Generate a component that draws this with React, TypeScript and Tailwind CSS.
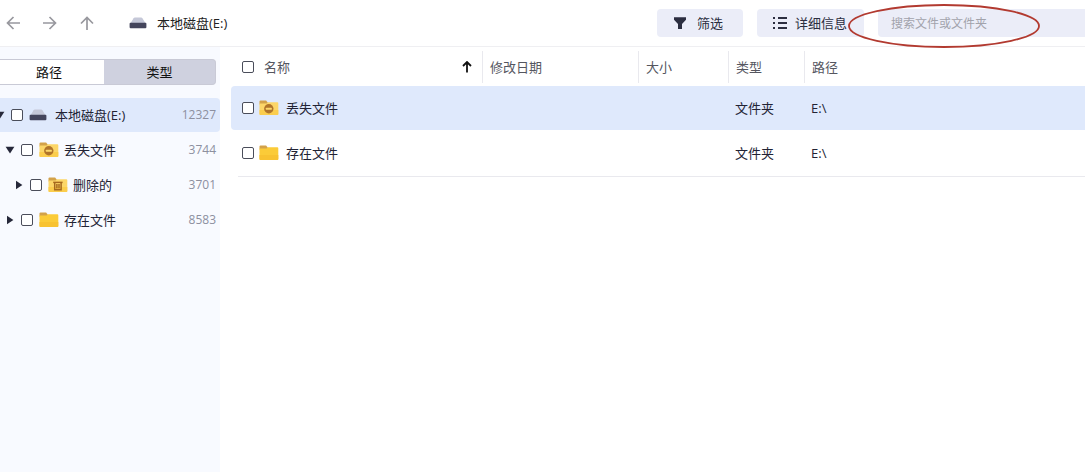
import type { ReactNode } from "react";

type IconKind = "disk" | "lost" | "deleted" | "folder";

function DiskIcon() {
  return (
    <svg width="18" height="16" viewBox="0 0 18 16" aria-hidden="true" className="shrink-0">
      <path d="M4.6 3.2Q5 2.6 5.8 2.6h6.4q.8 0 1.2.6L17 9H1z" fill="#c5c8d8" />
      <rect x=".6" y="7.8" width="16.8" height="5.4" rx="1" fill="#44455c" />
    </svg>
  );
}

function FolderIcon({ kind }: { kind: IconKind }) {
  const plain = kind === "folder";
  return (
    <svg width="20" height="16" viewBox="0 0 20 16" aria-hidden="true" className="shrink-0">
      <path d="M.5 1.4Q.5.4 1.5.4h5.6l1.6 2.2v2H.5z" fill="#d3a24a" />
      <path d="M.5 3.6h7L9 2.2h9.3q1 0 1 1v10.9q0 1-1 1H1.5q-1 0-1-1z" fill={plain ? "#fbcb38" : "#fcd668"} />
      <path d="M.5 10h18.8v4.1q0 1-1 1H1.5q-1 0-1-1z" fill={plain ? "#f8c231" : "#fbcd4d"} />
      {kind === "lost" && (
        <>
          <circle cx="9.8" cy="8.8" r="4.7" fill="#b0742a" />
          <rect x="6.8" y="7.8" width="6" height="2" rx=".5" fill="#fcd668" />
        </>
      )}
      {kind === "deleted" && (
        <g fill="none" stroke="#a5681f" strokeWidth="1.5">
          <path d="M5.2 5.4h9.4" />
          <path d="M6.7 5.5v7.3h6.4V5.5M8.9 7v4.4M11 7v4.4" />
        </g>
      )}
    </svg>
  );
}

function ItemIcon({ kind }: { kind: IconKind }) {
  return kind === "disk" ? <DiskIcon /> : <FolderIcon kind={kind} />;
}

function Check({ label }: { label: string }) {
  return (
    <input
      type="checkbox"
      aria-label={label}
      className="m-0 size-3 shrink-0 appearance-none rounded-xs border border-[#4a4d5a] bg-white checked:bg-[#3e4150]"
    />
  );
}

function NavButton({ label, children }: { label: string; children: ReactNode }) {
  return (
    <button type="button" aria-label={label} className="flex size-4 items-center justify-center text-[#98989e]">
      <svg width="16" height="16" viewBox="0 0 16 16" fill="none" stroke="currentColor" strokeWidth="1.7" aria-hidden="true">
        {children}
      </svg>
    </button>
  );
}

const tree: { name: string; count: number; kind: IconKind; open: boolean; indent: string; active?: boolean }[] = [
  { name: "本地磁盘(E:)", count: 12327, kind: "disk", open: true, indent: "-ml-[5px]", active: true },
  { name: "丢失文件", count: 3744, kind: "lost", open: true, indent: "ml-[5px]" },
  { name: "删除的", count: 3701, kind: "deleted", open: false, indent: "ml-[14px]" },
  { name: "存在文件", count: 8583, kind: "folder", open: false, indent: "ml-[5px]" },
];

const files: { name: string; kind: IconKind; type: string; path: string; selected: boolean }[] = [
  { name: "丢失文件", kind: "lost", type: "文件夹", path: "E:\\", selected: true },
  { name: "存在文件", kind: "folder", type: "文件夹", path: "E:\\", selected: false },
];

function Toolbar() {
  return (
    <header className="flex h-[47px] items-center border-b border-[#efeff2]">
      <nav className="flex items-center gap-[21px] pl-[5px]">
        <NavButton label="后退">
          <path d="M15 8H2.5M8.5 2l-6 6 6 6" />
        </NavButton>
        <NavButton label="前进">
          <path d="M1 8h12.5M7.5 2l6 6-6 6" />
        </NavButton>
        <NavButton label="上一级">
          <path d="M8 15V2.5M2 8.5l6-6 6 6" />
        </NavButton>
      </nav>
      <div className="ml-[34px] flex items-center gap-2.5 text-[#222]">
        <DiskIcon />
        <span>本地磁盘(E:)</span>
      </div>
      <div className="ml-auto flex items-center">
        <button type="button" className="flex h-7 items-center gap-2.5 rounded bg-[#ebedf8] pr-5 pl-4 text-[#2c2e40]">
          <svg width="14" height="14" viewBox="0 0 14 14" fill="currentColor" aria-hidden="true">
            <path d="M1 1.2h12v2.6L9 8v5H5V8L1 3.8z" />
          </svg>
          筛选
        </button>
        <button type="button" className="ml-3.5 flex h-7 items-center gap-2 rounded bg-[#ebedf8] pr-[17px] pl-4 text-[#2c2e40]">
          <svg width="14" height="14" viewBox="0 0 14 14" fill="currentColor" aria-hidden="true">
            <path d="M0 1h2v2H0zM0 6h2v2H0zM0 11h2v2H0zM5 1h9v2H5zM5 6h9v2H5zM5 11h9v2H5z" />
          </svg>
          详细信息
        </button>
        <div className="relative ml-3.5">
          <input
            type="search"
            aria-label="搜索文件或文件夹"
            placeholder="搜索文件或文件夹"
            className="block h-7 w-[207px] rounded-l bg-[#ebedf8] pl-[13px] text-xs text-[#2c2e40] outline-none placeholder:text-[#a2a3ac]"
          />
          <svg
            width="192"
            height="44"
            viewBox="0 0 192 44"
            fill="none"
            aria-hidden="true"
            className="pointer-events-none absolute -top-[5px] -left-[30px]"
          >
            <ellipse cx="96" cy="22" rx="95" ry="21" stroke="#b23a30" strokeWidth="1.8" />
          </svg>
        </div>
      </div>
    </header>
  );
}

function Sidebar() {
  return (
    <aside className="w-[220px] shrink-0 overflow-hidden bg-[#f8faff] pt-3">
      <div className="mr-1 flex h-[26px] rounded-r border border-l-0 border-[#c9cad6] bg-[#cfd1df] text-[#111]">
        <button type="button" className="w-[104px] bg-white pr-1.5 text-center">
          路径
        </button>
        <button type="button" className="flex-1 text-center">
          类型
        </button>
      </div>
      <ul className="mt-[13px]">
        {tree.map((n) => (
          <li
            key={n.name}
            className={`mb-px flex h-[34px] items-center rounded-r pr-1 ${n.active ? "bg-[#dfe9fc]" : ""}`}
          >
            <button
              type="button"
              aria-label={n.open ? "收起" : "展开"}
              className={`${n.indent} flex size-2.5 shrink-0 items-center justify-center text-[#26283a]`}
            >
              <svg width="10" height="10" viewBox="0 0 10 10" fill="currentColor" aria-hidden="true">
                <path d={n.open ? "M.6 1.8h8.8L5 8.4z" : "M2 .8l6.4 4.2L2 9.2z"} />
              </svg>
            </button>
            <label className="ml-1.5 flex min-w-0 flex-1 items-center text-[#222334]">
              <Check label={n.name} />
              <span className={`ml-1.5 flex ${n.kind === "disk" ? "mr-2" : "mr-[5px]"}`}>
                <ItemIcon kind={n.kind} />
              </span>
              {n.name}
            </label>
            <span className="text-xs text-[#8d909f]">{n.count}</span>
          </li>
        ))}
      </ul>
    </aside>
  );
}

function Heading({ width, children }: { width: string; children: ReactNode }) {
  return (
    <th className={`h-[39px] p-0 text-left font-normal ${width}`}>
      <div className="flex h-8 items-center border-l border-[#e9e9ee] pl-[7px]">{children}</div>
    </th>
  );
}

function FileTable() {
  return (
    <main className="min-w-0 flex-1 pl-[11px]">
      <table className="w-full table-fixed border-separate border-spacing-0">
        <thead className="text-[#55565f]">
          <tr>
            <th className="h-[39px] w-[251px] p-0 text-left font-normal">
              <div className="flex h-8 items-center pr-2.5 pl-[11px]">
                <Check label="全选" />
                <span className="ml-2.5 flex-1">名称</span>
                <svg width="10" height="12" viewBox="0 0 10 12" fill="none" stroke="#111" strokeWidth="1.8" aria-hidden="true">
                  <path d="M5 11.5V1.5M1 5l4-4 4 4" />
                </svg>
              </div>
            </th>
            <Heading width="w-[156px]">修改日期</Heading>
            <Heading width="w-[90px]">大小</Heading>
            <Heading width="w-[76px]">类型</Heading>
            <Heading width="w-auto">路径</Heading>
          </tr>
        </thead>
        <tbody className="text-[#222334]">
          {files.map((f) => {
            const cell = f.selected ? "h-11 bg-[#dfe9fc] p-0" : "h-[47px] border-b border-[#e9e9ee] p-0";
            return (
              <tr key={f.name}>
                <td className={f.selected ? "rounded-l bg-[#dfe9fc] p-0" : "p-0"}>
                  <label
                    className={`flex items-center ${f.selected ? "h-11 pl-[11px]" : "ml-[7px] h-[47px] border-b border-[#e9e9ee] pl-1"}`}
                  >
                    <Check label={f.name} />
                    <span className="mr-[7px] ml-[5px] flex">
                      <ItemIcon kind={f.kind} />
                    </span>
                    {f.name}
                  </label>
                </td>
                <td className={cell} />
                <td className={cell} />
                <td className={cell}>
                  <span className="pl-[7px]">{f.type}</span>
                </td>
                <td className={cell}>
                  <span className="pl-[7px]">{f.path}</span>
                </td>
              </tr>
            );
          })}
        </tbody>
      </table>
    </main>
  );
}

export default function App() {
  return (
    <div className="flex min-h-screen flex-col bg-white font-['Open_Sans','Noto_Sans_CJK_SC',sans-serif] text-[13px] leading-5">
      <Toolbar />
      <div className="flex flex-1">
        <Sidebar />
        <FileTable />
      </div>
    </div>
  );
}
